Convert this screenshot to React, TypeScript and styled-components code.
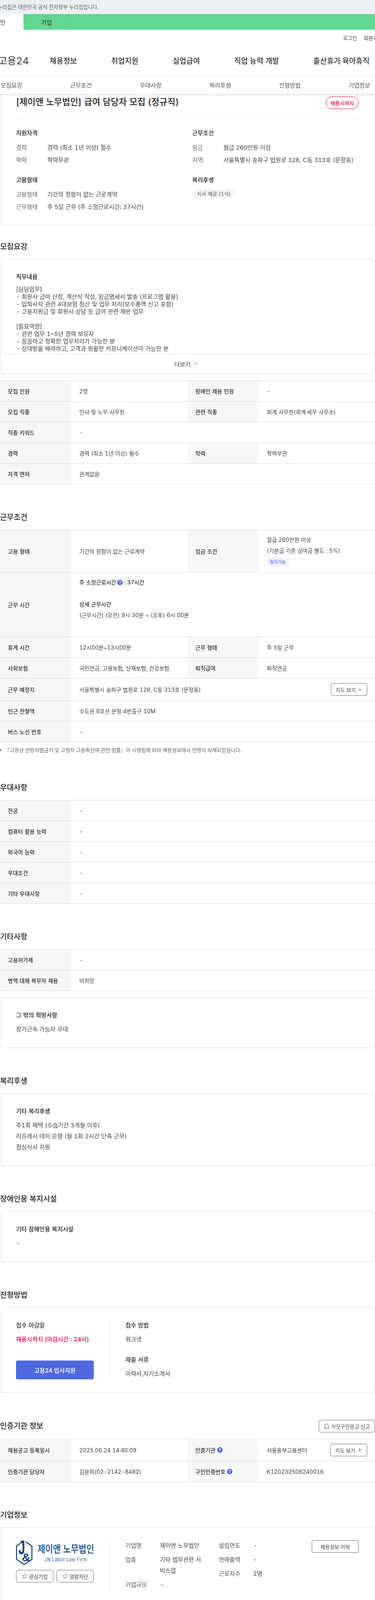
import React from "react";
import styled, { createGlobalStyle } from "styled-components";
import { ChevronDown, ChevronRight, Star } from "lucide-react";

const GlobalStyle = createGlobalStyle`
  html, body {
    margin: 0;
    padding: 0;
    overflow-x: hidden;
    background: #fff;
  }
  body {
    font-family: Inter, "Noto Sans CJK KR", sans-serif;
    font-size: 14px;
    font-variant-numeric: tabular-nums;
    word-spacing: 0.5px;
    color: #444;
  }
  * { box-sizing: border-box; }
`;

const Page = styled.div`
  width: 960px;
  overflow: hidden;
`;

const NoticeBar = styled.div`
  height: 36px;
  background: #eceff4;
  overflow: hidden;
`;

const Notice = styled.div`
  margin-left: -6px;
  font-size: 13.1px;
  line-height: 36px;
  word-spacing: 0;
  white-space: nowrap;
  color: #666;
`;

const GreenBar = styled.div`
  display: flex;
  height: 40px;
  background: #63d693;
`;

const GreenTab = styled.div<{ $active?: boolean }>`
  display: flex;
  align-items: center;
  justify-content: center;
  width: ${(p) => (p.$active ? "120px" : "119px")};
  margin-left: ${(p) => (p.$active ? "-60px" : "0")};
  background: ${(p) => (p.$active ? "#fff" : "transparent")};
  border-right: ${(p) => (p.$active ? "none" : "1px solid #5ac98a")};
  font-size: 15px;
  color: #333;
`;

const UtilLinks = styled.div`
  display: flex;
  align-items: center;
  gap: 17px;
  height: 40px;
  padding-left: 878px;
  width: 1040px;
  font-size: 13px;
  color: #444;
`;

const MainNav = styled.div`
  display: flex;
  align-items: center;
  height: 77px;
  border-bottom: 1px solid #e5e5e5;
`;

const Logo = styled.div`
  flex: 0 0 114px;
  margin: 0 53px 0 -40px;
  font-size: 25px;
  font-weight: 500;
  text-align: right;
  white-space: nowrap;
  color: #555;
`;

const NavItems = styled.div`
  display: flex;
  gap: 87.5px;
  font-size: 19px;
  font-weight: 500;
  word-spacing: 0;
  color: #333;
  white-space: nowrap;
`;

const NarrowDot = styled.span`
  font-family: "Liberation Sans", sans-serif;
  letter-spacing: -2px;
`;

const SubNav = styled.div`
  position: relative;
  z-index: 1;
  display: grid;
  grid-template-columns: repeat(6, 178.2px);
  height: 48px;
  margin-left: -60px;
  width: 1080px;
  background: #fff;
  box-shadow: 0 2px 3px rgba(0, 0, 0, 0.16);
`;

const SubNavItem = styled.div`
  display: flex;
  align-items: center;
  justify-content: center;
  font-size: 15px;
  color: #555;
`;

const SummaryCard = styled.div`
  padding: 0 41px 35px 40px;
  border: 1px solid #ddd;
  border-top: none;
  border-radius: 0 0 8px 8px;
`;

const TitleRow = styled.div`
  display: flex;
  justify-content: space-between;
  align-items: flex-start;
  height: 63px;
  border-bottom: 1px solid #e8e8e8;
`;

const JobTitle = styled.h1`
  margin: 0;
  font-size: 22.35px;
  font-weight: 500;
  line-height: 40px;
  color: #222;
`;

const StatusBadge = styled.span`
  display: flex;
  align-items: center;
  justify-content: center;
  width: 84px;
  height: 32px;
  margin-top: 6px;
  border: 1px solid #e6004e;
  border-radius: 16px;
  font-size: 13px;
  font-weight: 500;
  color: #e6004e;
`;

const SummaryGrid = styled.div`
  display: grid;
  grid-template-columns: 451px 1fr;
  row-gap: 29px;
  padding-top: 26px;
`;

const GroupTitle = styled.div`
  margin-bottom: 15px;
  font-size: 15px;
  font-weight: 500;
  line-height: 22px;
  color: #222;
`;

const Pair = styled.div`
  display: flex;
  line-height: 22px;
  font-size: 15px;
  & + & {
    margin-top: 10px;
  }
`;

const PairLabel = styled.span`
  flex: 0 0 80px;
  color: #666;
`;

const Chip = styled.span`
  display: inline-block;
  height: 24px;
  margin-top: -3px;
  padding: 0 12px;
  border-radius: 12px;
  background: #f5f5f5;
  font-size: 13px;
  line-height: 24px;
  color: #555;
`;

const Section = styled.section<{ $first?: boolean }>`
  margin-top: ${(p) => (p.$first ? "40px" : "70px")};
`;

const SectionHead = styled.div`
  display: flex;
  align-items: center;
  justify-content: space-between;
  min-height: 30px;
  margin-bottom: 16px;
`;

const SectionTitle = styled.h2`
  margin: 0;
  font-size: 19px;
  font-weight: 500;
  line-height: 30px;
  color: #222;
`;

const Card = styled.div`
  border: 1px solid #ddd;
  border-radius: 8px;
`;

const JobBody = styled.div`
  height: 240px;
  padding: 34px 40px 0;
  overflow: hidden;
`;

const BodyTitle = styled.div`
  font-size: 15px;
  font-weight: 500;
  line-height: 22px;
  color: #222;
`;

const BodyText = styled.pre`
  margin: 11px 0 0;
  font-family: inherit;
  font-size: 15px;
  line-height: 19px;
  color: #444;
`;

const MoreButton = styled.div`
  display: flex;
  align-items: center;
  justify-content: center;
  gap: 6px;
  height: 53px;
  padding-right: 6px;
  border-top: 1px solid #ddd;
  font-size: 15px;
  color: #444;
`;

const InfoCard = styled(Card)<{ $spaced?: boolean }>`
  margin-top: ${(p) => (p.$spaced ? "16px" : "0")};
  padding: 34px 40px 33px;
`;

const InfoHead = styled.div`
  margin-bottom: 11px;
  font-size: 15px;
  font-weight: 500;
  line-height: 22px;
  color: #222;
`;

const InfoLine = styled.div`
  font-size: 15px;
  line-height: 28px;
  color: #444;
`;

const Table = styled.div<{ $spaced?: boolean }>`
  margin-top: ${(p) => (p.$spaced ? "16px" : "0")};
  border-top: 1px solid #ddd;
`;

const Row = styled.div<{ $height?: number }>`
  display: grid;
  grid-template-columns: 182px 298px 182px 298px;
  min-height: ${(p) => p.$height ?? 53}px;
  border-bottom: 1px solid #ddd;
`;

const Th = styled.div`
  display: flex;
  align-items: center;
  gap: 4px;
  padding-left: 20px;
  background: #f7f7f7;
  font-size: 14px;
  font-weight: 500;
  color: #333;
`;

const Td = styled.div<{ $span?: boolean }>`
  display: flex;
  align-items: center;
  justify-content: space-between;
  padding: 0 20px 0 21px;
  grid-column: ${(p) => (p.$span ? "span 3" : "auto")};
  font-size: 14px;
  color: #444;
`;

const StackTd = styled(Td)`
  display: block;
  padding-top: 11px;
  line-height: 28px;
`;

const StrongLine = styled.div`
  display: flex;
  align-items: center;
  gap: 3px;
  height: 28px;
  font-weight: 500;
  color: #333;
`;

const BlueChip = styled.span`
  display: block;
  width: 56px;
  height: 22px;
  margin-top: 4px;
  border-radius: 3px;
  background: #eff1fd;
  font-size: 11px;
  line-height: 22px;
  text-align: center;
  color: #4f68e0;
`;

const HelpDot = styled.span`
  display: inline-flex;
  align-items: center;
  justify-content: center;
  width: 14px;
  height: 14px;
  border-radius: 50%;
  background: #4f68e0;
  font-size: 10px;
  font-weight: 700;
  color: #fff;
`;

const OutlineButton = styled.button<{ $width: number }>`
  display: inline-flex;
  align-items: center;
  justify-content: center;
  gap: 4px;
  flex-shrink: 0;
  width: ${(p) => p.$width}px;
  height: 32px;
  padding: 0;
  border: 1px solid #666;
  border-radius: 4px;
  background: #fff;
  font-family: inherit;
  font-size: 13px;
  color: #444;
`;

const Note = styled.div`
  display: flex;
  align-items: center;
  gap: 8px;
  margin-top: 8px;
  font-size: 13px;
  line-height: 24px;
  word-spacing: 0;
  color: #666;
  &::before {
    content: "";
    width: 4px;
    height: 4px;
    border-radius: 50%;
    background: #666;
  }
`;

const ApplyCard = styled(Card)`
  display: flex;
  padding: 31px 41px 33px 40px;
`;

const ApplyLeft = styled.div`
  display: flex;
  flex-direction: column;
  justify-content: space-between;
  margin-right: 40px;
  border-right: 1px solid #e8e8e8;
  flex: 0 0 240px;
`;

const ApplyRight = styled.div`
  display: flex;
  flex-direction: column;
  gap: 24px;
`;

const ApplyGroup = styled.div`
  display: flex;
  flex-direction: column;
  gap: 8px;
  font-size: 15px;
  line-height: 28px;
`;

const ApplyLabel = styled.div`
  font-weight: 500;
  color: #333;
`;

const Deadline = styled.div`
  font-weight: 500;
  color: #e6004e;
`;

const ApplyButton = styled.button`
  width: 199px;
  height: 48px;
  border: none;
  border-radius: 4px;
  background: #4f68e0;
  font-family: inherit;
  font-size: 15px;
  font-weight: 500;
  color: #fff;
`;

const CompanyCard = styled(Card)`
  display: flex;
  padding: 32px 41px 32px 40px;
`;

const CompanyLeft = styled.div`
  flex: 0 0 240px;
  margin-right: 40px;
  border-right: 1px solid #e8e8e8;
`;

const LogoBox = styled.div`
  display: flex;
  align-items: center;
  gap: 13px;
  width: 200px;
  height: 64px;
`;

const MarkSvg = styled.svg`
  flex-shrink: 0;
`;

const LogoWords = styled.div`
  display: flex;
  flex-direction: column;
  align-items: center;
  color: #123f7d;
`;

const LogoKorean = styled.div`
  font-size: 21.6px;
  font-weight: 500;
  line-height: 30px;
  word-spacing: 0;
  white-space: nowrap;
  transform: scaleY(1.2);
`;

const LogoEnglish = styled.div`
  margin-top: 6px;
  font-size: 10.5px;
  line-height: 14px;
  letter-spacing: 0.9px;
  word-spacing: 0;
  white-space: nowrap;
  color: #2b5d9b;
  transform: scaleY(1.25);
`;

const CompanyActions = styled.div`
  display: flex;
  gap: 8px;
  margin-top: 12px;
`;

const CompanyCol = styled.dl<{ $width: number }>`
  display: grid;
  grid-template-columns: 88px 1fr;
  grid-auto-rows: min-content;
  row-gap: 8px;
  width: ${(p) => p.$width}px;
  margin: 0;
  font-size: 15px;
  line-height: 28px;
  dt {
    color: #555;
  }
  dd {
    margin: 0;
    padding-right: 41px;
    color: #444;
    word-break: break-all;
  }
`;

const CompanyRight = styled.div`
  flex: 1;
  display: flex;
  justify-content: flex-end;
`;

const BellIcon = () => (
  <svg width="14" height="16" viewBox="0 0 14 16" fill="none" stroke="#555" strokeWidth="1.2">
    <path d="M2.5 13V6.5a4.5 4.5 0 0 1 9 0V13" />
    <path d="M1 13.5h12" />
  </svg>
);

const BlockIcon = () => (
  <svg width="14" height="14" viewBox="0 0 14 14">
    <circle cx="7" cy="7" r="7" fill="#d6d6d6" />
    <path d="M4.5 4.5l5 5M9.5 4.5l-5 5" stroke="#fff" strokeWidth="1.4" />
  </svg>
);

const HexMark = () => (
  <MarkSvg width="42" height="64" viewBox="0 0 42 64">
    <path d="M17 4L1.3 15v34L21 62l19.7-13V15L25 4" fill="none" stroke="#123f7d" strokeWidth="2.5" />
    <text transform="translate(6,36) scale(0.62,1)" fontSize="50" fontWeight="700" fontFamily="Liberation Sans, sans-serif" fill="#123f7d">J</text>
    <text x="15" y="54" fontSize="30" fontWeight="700" fontFamily="Liberation Sans, sans-serif" fill="#123f7d">&amp;</text>
  </MarkSvg>
);

const recruitRows: [string, React.ReactNode, string?, React.ReactNode?][] = [
  ["모집 인원", "2명", "장애인 채용 인원", "-"],
  ["모집 직종", "인사 및 노무 사무원", "관련 직종", <span>회계 사무원(회계<NarrowDot>·</NarrowDot>세무 사무소)</span>],
  ["직종 키워드", "-"],
  ["경력", "경력 (최소 1년 이상) 필수", "학력", "학력무관"],
  ["자격 면허", "관계없음"],
];

const preferRows: [string, string][] = [
  ["전공", "-"],
  ["컴퓨터 활용 능력", "-"],
  ["외국어 능력", "-"],
  ["우대조건", "-"],
  ["기타 우대사항", "-"],
];

const etcRows: [string, string][] = [
  ["고용허가제", "-"],
  ["병역 대체 복무자 채용", "비희망"],
];

const jobText = `[담당업무]
- 회원사 급여 산정, 계산식 작성, 임금명세서 발송 (프로그램 활용)
- 입퇴사자 관련 4대보험 정산 및 업무 처리(보수총액 신고 포함)
- 고용지원금 및 회원사 상담 등 급여 관련 제반 업무

[필요역량]
- 관련 업무 1~5년 경력 보유자
- 꼼꼼하고 정확한 업무처리가 가능한 분
- 상대방을 배려하고, 고객과 원활한 커뮤니케이션이 가능한 분`;

const SimpleRows = ({ rows }: { rows: [string, React.ReactNode, string?, React.ReactNode?][] }) => (
  <>
    {rows.map((r) => (
      <Row key={r[0]}>
        <Th>{r[0]}</Th>
        {r[2] ? (
          <>
            <Td>{r[1]}</Td>
            <Th>{r[2]}</Th>
            <Td>{r[3]}</Td>
          </>
        ) : (
          <Td $span>{r[1]}</Td>
        )}
      </Row>
    ))}
  </>
);

export default function App() {
  return (
    <Page>
      <GlobalStyle />
      <NoticeBar>
        <Notice>누리집은 대한민국 공식 전자정부 누리집입니다.</Notice>
      </NoticeBar>
      <GreenBar>
        <GreenTab $active>개인</GreenTab>
        <GreenTab>기업</GreenTab>
      </GreenBar>
      <UtilLinks>
        <span>로그인</span>
        <span>회원가입</span>
      </UtilLinks>
      <MainNav>
        <Logo>고용24</Logo>
        <NavItems>
          <span>채용정보</span>
          <span>취업지원</span>
          <span>실업급여</span>
          <span>직업 능력 개발</span>
          <span>출산휴가<NarrowDot>·</NarrowDot>육아휴직</span>
        </NavItems>
      </MainNav>
      <SubNav>
        {["모집요강", "근무조건", "우대사항", "복리후생", "전형방법", "기업정보"].map((t) => (
          <SubNavItem key={t}>{t}</SubNavItem>
        ))}
      </SubNav>

      <SummaryCard>
        <TitleRow>
          <JobTitle>[제이앤 노무법인] 급여 담당자 모집 (정규직)</JobTitle>
          <StatusBadge>채용시까지</StatusBadge>
        </TitleRow>
        <SummaryGrid>
          <div>
            <GroupTitle>지원자격</GroupTitle>
            <Pair><PairLabel>경력</PairLabel>경력 (최소 1년 이상) 필수</Pair>
            <Pair><PairLabel>학력</PairLabel>학력무관</Pair>
          </div>
          <div>
            <GroupTitle>근무조건</GroupTitle>
            <Pair><PairLabel>임금</PairLabel>월급 260만원 이상</Pair>
            <Pair><PairLabel>지역</PairLabel>서울특별시 송파구 법원로 128, C동 313호 (문정동)</Pair>
          </div>
          <div>
            <GroupTitle>고용형태</GroupTitle>
            <Pair><PairLabel>고용형태</PairLabel>기간의 정함이 없는 근로계약</Pair>
            <Pair><PairLabel>근무형태</PairLabel>주 5일 근무 (주 소정근로시간: 37시간)</Pair>
          </div>
          <div>
            <GroupTitle>복리후생</GroupTitle>
            <Chip>식사 제공 (1식)</Chip>
          </div>
        </SummaryGrid>
      </SummaryCard>

      <Section $first>
        <SectionHead><SectionTitle>모집요강</SectionTitle></SectionHead>
        <Card>
          <JobBody>
            <BodyTitle>직무내용</BodyTitle>
            <BodyText>{jobText}</BodyText>
          </JobBody>
          <MoreButton>더보기 <ChevronDown size={14} strokeWidth={1.8} /></MoreButton>
        </Card>
        <Table $spaced>
          <SimpleRows rows={recruitRows} />
        </Table>
      </Section>

      <Section>
        <SectionHead><SectionTitle>근무조건</SectionTitle></SectionHead>
        <Table>
          <Row $height={109}>
            <Th>고용 형태</Th>
            <Td>기간의 정함이 없는 근로계약</Td>
            <Th>임금 조건</Th>
            <StackTd>
              월급 260만원 이상
              <br />
              (기본급 기준 상여금 별도 : 5%)
              <BlueChip>협의가능</BlueChip>
            </StackTd>
          </Row>
          <Row $height={165}>
            <Th>근무 시간</Th>
            <StackTd $span>
              <StrongLine>주 소정근로시간 <HelpDot>?</HelpDot>: 37시간</StrongLine>
              <br />
              <StrongLine>상세 근무시간</StrongLine>
              (근무시간) (오전) 9시 30분 ~ (오후) 6시 00분
            </StackTd>
          </Row>
          <Row>
            <Th>휴게 시간</Th>
            <Td>12시00분~13시00분</Td>
            <Th>근무 형태</Th>
            <Td>주 5일 근무</Td>
          </Row>
          <Row>
            <Th>사회보험</Th>
            <Td>국민연금, 고용보험, 산재보험, 건강보험</Td>
            <Th>퇴직급여</Th>
            <Td>퇴직연금</Td>
          </Row>
          <Row $height={57}>
            <Th>근무 예정지</Th>
            <Td $span>
              서울특별시 송파구 법원로 128, C동 313호 (문정동)
              <OutlineButton $width={93}>지도 보기 <ChevronDown size={13} /></OutlineButton>
            </Td>
          </Row>
          <Row>
            <Th>인근 전철역</Th>
            <Td $span>수도권 8호선 문정 4번출구 10M</Td>
          </Row>
          <Row>
            <Th>버스 노선 번호</Th>
            <Td $span>-</Td>
          </Row>
        </Table>
        <Note>『고용상 연령차별금지 및 고령자 고용촉진에 관한 법률』이 시행됨에 따라 채용정보에서 연령이 삭제되었습니다.</Note>
      </Section>

      <Section>
        <SectionHead><SectionTitle>우대사항</SectionTitle></SectionHead>
        <Table><SimpleRows rows={preferRows} /></Table>
      </Section>

      <Section>
        <SectionHead><SectionTitle>기타사항</SectionTitle></SectionHead>
        <Table><SimpleRows rows={etcRows} /></Table>
        <InfoCard $spaced>
          <InfoHead>그 밖의 희망사항</InfoHead>
          <InfoLine>장기근속 가능자 우대</InfoLine>
        </InfoCard>
      </Section>

      <Section>
        <SectionHead><SectionTitle>복리후생</SectionTitle></SectionHead>
        <InfoCard>
          <InfoHead>기타 복리후생</InfoHead>
          <InfoLine>주1회 재택 (수습기간 3개월 이후)</InfoLine>
          <InfoLine>리프레시 데이 운영 (월 1회 2시간 단축 근무)</InfoLine>
          <InfoLine>점심식사 지원</InfoLine>
        </InfoCard>
      </Section>

      <Section>
        <SectionHead><SectionTitle>장애인용 복지시설</SectionTitle></SectionHead>
        <InfoCard>
          <InfoHead>기타 장애인용 복지시설</InfoHead>
          <InfoLine>-</InfoLine>
        </InfoCard>
      </Section>

      <Section>
        <SectionHead><SectionTitle>전형방법</SectionTitle></SectionHead>
        <ApplyCard>
          <ApplyLeft>
            <ApplyGroup>
              <ApplyLabel>접수 마감일</ApplyLabel>
              <Deadline>채용시까지 (마감시간 : 24시)</Deadline>
            </ApplyGroup>
            <ApplyButton>고용24 입사지원</ApplyButton>
          </ApplyLeft>
          <ApplyRight>
            <ApplyGroup>
              <ApplyLabel>접수 방법</ApplyLabel>
              <div>워크넷</div>
            </ApplyGroup>
            <ApplyGroup>
              <ApplyLabel>제출 서류</ApplyLabel>
              <div>이력서,자기소개서</div>
            </ApplyGroup>
          </ApplyRight>
        </ApplyCard>
      </Section>

      <Section>
        <SectionHead>
          <SectionTitle>인증기관 정보</SectionTitle>
          <OutlineButton $width={144}><BellIcon /> 거짓구인광고 신고</OutlineButton>
        </SectionHead>
        <Table>
          <Row $height={57}>
            <Th>채용공고 등록일시</Th>
            <Td>2025.06.24 14:40:09</Td>
            <Th>인증기관 <HelpDot>?</HelpDot></Th>
            <Td>
              서울동부고용센터
              <OutlineButton $width={94}>지도 보기 <ChevronRight size={14} /></OutlineButton>
            </Td>
          </Row>
          <Row>
            <Th>인증기관 담당자</Th>
            <Td>김윤희(02-2142-8482)</Td>
            <Th>구인인증번호 <HelpDot>?</HelpDot></Th>
            <Td>K120232506240016</Td>
          </Row>
        </Table>
      </Section>

      <Section>
        <SectionHead><SectionTitle>기업정보</SectionTitle></SectionHead>
        <CompanyCard>
          <CompanyLeft>
            <LogoBox>
              <HexMark />
              <LogoWords>
                <LogoKorean>제이앤 노무법인</LogoKorean>
                <LogoEnglish>JN Labor Law Firm</LogoEnglish>
              </LogoWords>
            </LogoBox>
            <CompanyActions>
              <OutlineButton $width={96}><Star size={14} strokeWidth={1.4} /> 관심기업</OutlineButton>
              <OutlineButton $width={95}><BlockIcon /> 열람차단</OutlineButton>
            </CompanyActions>
          </CompanyLeft>
          <CompanyCol $width={239}>
            <dt>기업명</dt><dd>제이앤 노무법인</dd>
            <dt>업종</dt><dd>기타 법무관련 서비스업</dd>
            <dt>기업규모</dt><dd>-</dd>
          </CompanyCol>
          <CompanyCol $width={200}>
            <dt>설립연도</dt><dd>-</dd>
            <dt>연매출액</dt><dd>-</dd>
            <dt>근로자수</dt><dd>2명</dd>
          </CompanyCol>
          <CompanyRight>
            <OutlineButton $width={120}>채용정보 이력</OutlineButton>
          </CompanyRight>
        </CompanyCard>
      </Section>
    </Page>
  );
}
